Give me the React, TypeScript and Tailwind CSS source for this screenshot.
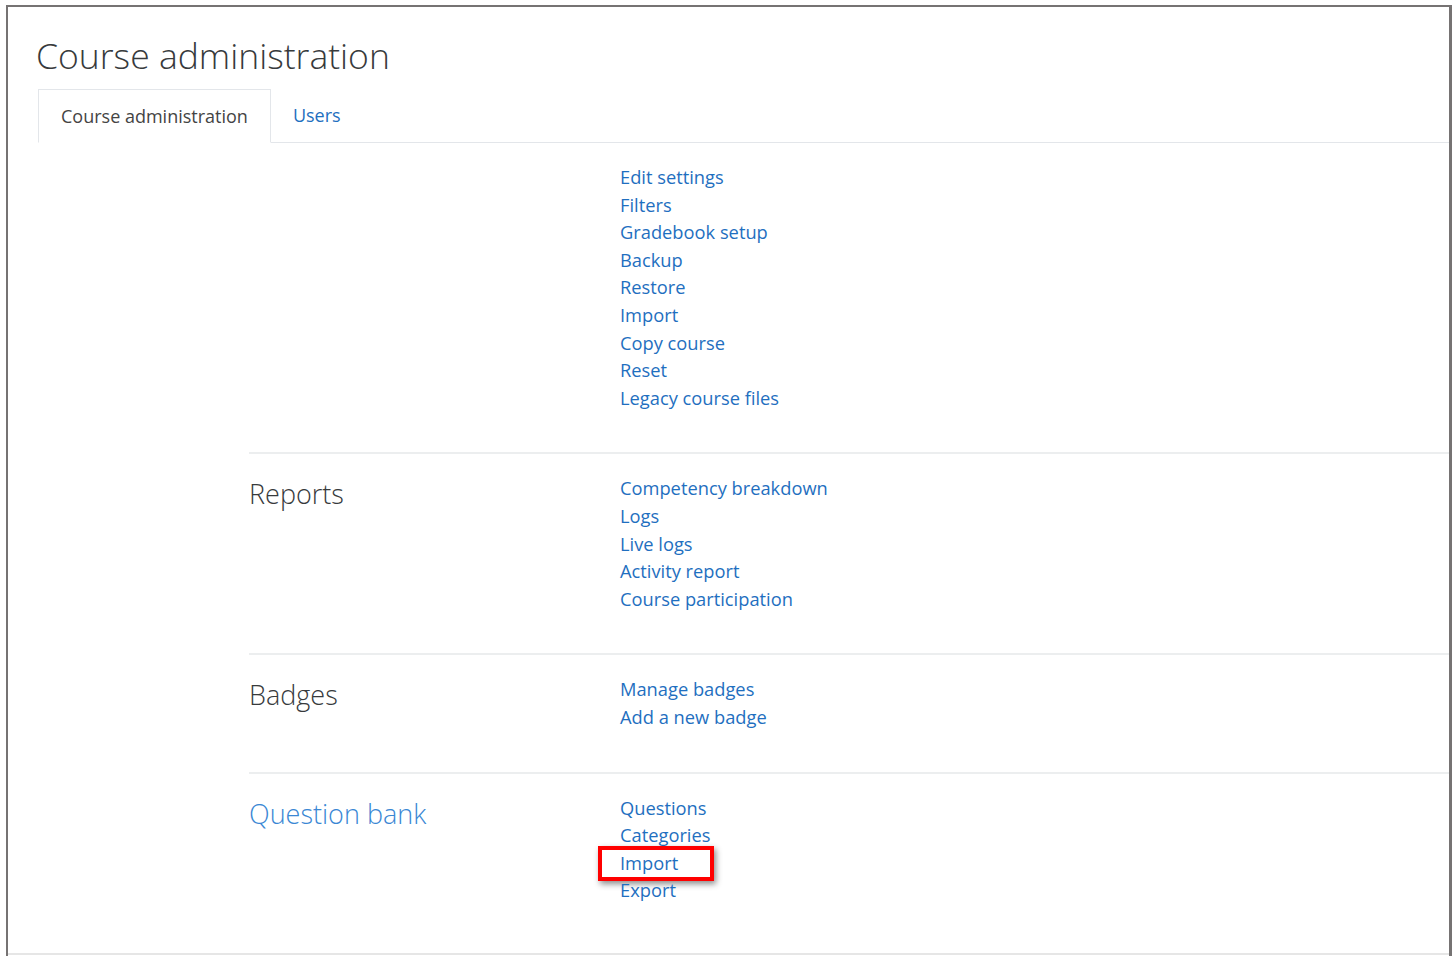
const sections: { title?: string; titleLink?: boolean; links: string[] }[] = [
  {
    links: [
      'Edit settings',
      'Filters',
      'Gradebook setup',
      'Backup',
      'Restore',
      'Import',
      'Copy course',
      'Reset',
      'Legacy course files',
    ],
  },
  {
    title: 'Reports',
    links: ['Competency breakdown', 'Logs', 'Live logs', 'Activity report', 'Course participation'],
  },
  { title: 'Badges', links: ['Manage badges', 'Add a new badge'] },
  { title: 'Question bank', titleLink: true, links: ['Questions', 'Categories', 'Import', 'Export'] },
]

function LinkList({ links, highlight }: { links: string[]; highlight?: string }) {
  return (
    <ul className="flex flex-col">
      {links.map((link) => (
        <li key={link} className="relative h-[27.6px] leading-[27.6px]">
          <a href="#" className="text-[#1f6fc0]">
            {link}
          </a>
          {highlight === link && (
            <span className="pointer-events-none absolute left-[-22px] top-[-3px] h-[35px] w-[116px] border-[4px] border-[#ff0000] shadow-[2px_3px_6px_rgba(0,0,0,0.45)]" />
          )}
        </li>
      ))}
    </ul>
  )
}

export default function App() {
  return (
    <div className="h-[956px] w-[1455px] overflow-hidden bg-white font-['Open_Sans',sans-serif] text-[#333]">
      <div className="ml-[6px] mt-[5px] flex h-[951px] w-[1446px] flex-col border-l-2 border-r-[3px] border-t-2 border-[#767373]">
        <div className="flex-1 pl-[30px]">
          <h1 className="-ml-[2px] mt-[26px] text-[35.5px] font-light leading-[44px] text-[#373a3c]">
            Course administration
          </h1>

          <div className="mt-[12px] flex h-[54px] border-b border-[#e3e6ea] text-[18px]">
            <div className="-mb-px flex items-center border border-b-white border-[#e3e6ea] bg-white px-[22px] text-[#444]">
              Course administration
            </div>
            <a href="#" className="flex items-center px-[22px] text-[#1f6fc0]">
              Users
            </a>
          </div>

          <div className="text-[18.3px]">
            {sections.map((section, i) => (
              <section
                key={i}
                className={
                  i === 0
                    ? 'ml-[211px] grid grid-cols-[371px_1fr] pb-[41px] pt-[20px]'
                    : 'ml-[211px] grid grid-cols-[371px_1fr] border-t-2 border-[#eceeef] pb-[41px] pt-[20px]'
                }
              >
                <div className="pt-[2px]">
                  {section.title && (
                    <h2
                      className={
                        section.titleLink
                          ? 'text-[27px] font-light leading-[36px] text-[#3a87d4]'
                          : 'text-[27px] font-light leading-[36px] text-[#373a3c]'
                      }
                    >
                      {section.title}
                    </h2>
                  )}
                </div>
                <LinkList links={section.links} highlight={section.titleLink ? 'Import' : undefined} />
              </section>
            ))}
          </div>
        </div>
        <div className="h-[3px] border-t-2 border-[#e6e6e6]" />
      </div>
    </div>
  )
}
